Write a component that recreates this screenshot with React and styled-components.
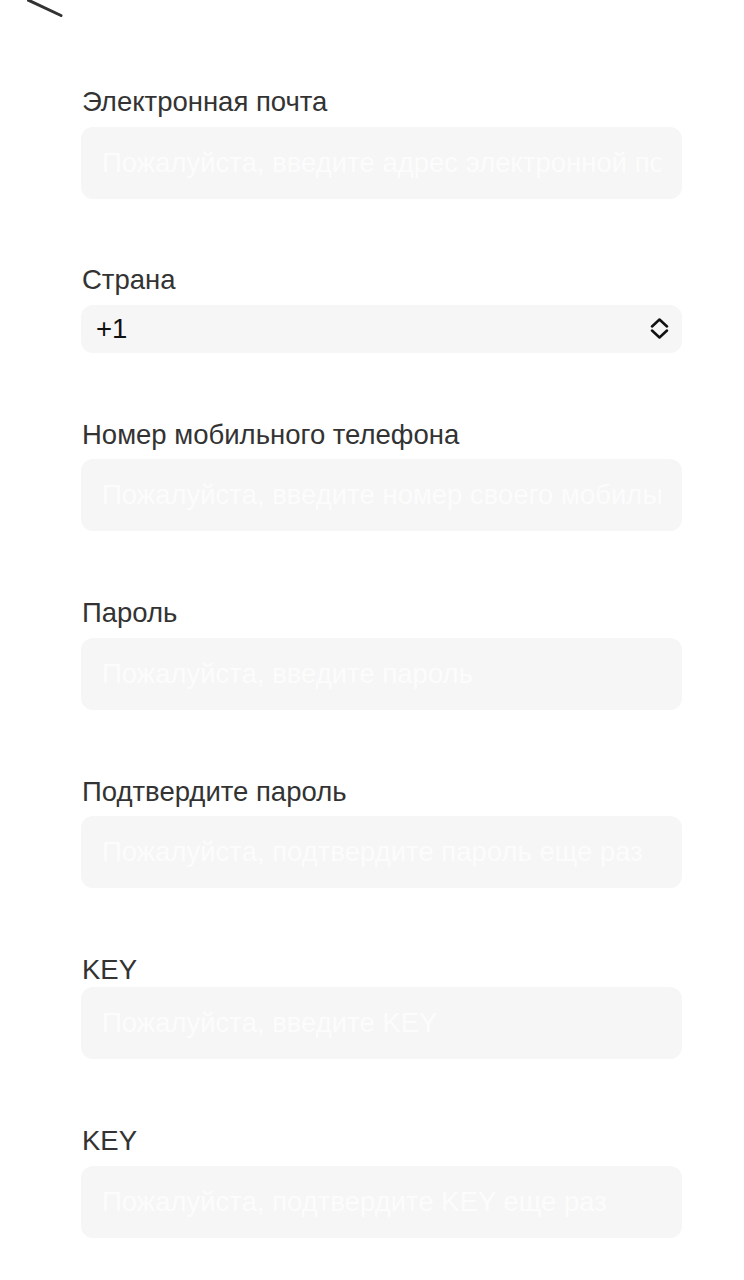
import React from "react";
import styled, { createGlobalStyle } from "styled-components";

const GlobalStyle = createGlobalStyle`
  html, body {
    margin: 0;
    padding: 0;
    background: #ffffff;
  }
  body {
    font-family: "Liberation Sans", Arial, sans-serif;
  }
  * { box-sizing: border-box; }
`;

const Page = styled.div`
  width: 744px;
  min-height: 1280px;
  background: #fff;
  overflow: hidden;
`;

const Header = styled.div`
  height: 18px;
  padding-left: 27px;
  display: flex;
  align-items: flex-start;
`;

const Form = styled.form`
  margin-top: 68.5px;
  padding: 0 62px 0 81px;
  display: flex;
  flex-direction: column;
  gap: 66.9px;
`;

const Field = styled.div`
  display: flex;
  flex-direction: column;
  gap: ${(p) => p.$gap}px;
`;

const Label = styled.label`
  font-size: 27.5px;
  line-height: 30px;
  color: #333333;
  padding-left: 1px;
`;

const Input = styled.input`
  width: 100%;
  height: 72px;
  border: none;
  outline: none;
  border-radius: 12px;
  background: #f6f6f6;
  padding: 0 21px;
  font-family: "Liberation Sans", Arial, sans-serif;
  font-size: 27.5px;
  color: #222;
  &::placeholder {
    color: #fcfcfc;
  }
`;

const SelectBox = styled.button`
  width: 100%;
  height: 48px;
  border: none;
  border-radius: 12px;
  background: #f6f6f6;
  padding: 0 13px 0 15px;
  display: flex;
  align-items: center;
  justify-content: space-between;
  font-family: "Liberation Sans", Arial, sans-serif;
  font-size: 27.5px;
  color: #111;
  cursor: pointer;
`;

const SelectValue = styled.span`
  line-height: 30px;
`;

const BackIcon = () => (
  <svg width="40" height="18" viewBox="0 0 40 18">
    <line x1="-10" y1="-5.2" x2="34" y2="15.5" stroke="#333" strokeWidth="3" strokeLinecap="round" />
  </svg>
);

const UpDownIcon = () => (
  <svg width="19" height="21" viewBox="0 0 19 21">
    <polyline points="2,8.5 9.5,1.5 17,8.5" fill="none" stroke="#111" strokeWidth="2.5" strokeLinecap="round" strokeLinejoin="round" />
    <polyline points="2,12.5 9.5,19.5 17,12.5" fill="none" stroke="#111" strokeWidth="2.5" strokeLinecap="round" strokeLinejoin="round" />
  </svg>
);

const fields = [
  { label: "Электронная почта", placeholder: "Пожалуйста, введите адрес электронной почты", type: "email", gap: 16 },
  { label: "Страна", select: "+1", gap: 15.5 },
  { label: "Номер мобильного телефона", placeholder: "Пожалуйста, введите номер своего мобильного телефона", type: "tel", gap: 15.5 },
  { label: "Пароль", placeholder: "Пожалуйста, введите пароль", type: "password", gap: 15.5 },
  { label: "Подтвердите пароль", placeholder: "Пожалуйста, подтвердите пароль еще раз", type: "password", gap: 15.5 },
  { label: "KEY", placeholder: "Пожалуйста, введите KEY", type: "text", gap: 8.5 },
  { label: "KEY", placeholder: "Пожалуйста, подтвердите KEY еще раз", type: "text", gap: 16 },
];

export default function App() {
  return (
    <Page>
      <GlobalStyle />
      <Header>
        <BackIcon />
      </Header>
      <Form onSubmit={(e) => e.preventDefault()}>
        {fields.map((f, i) => (
          <Field key={i} $gap={f.gap - 6}>
            <Label>{f.label}</Label>
            {f.select ? (
              <SelectBox type="button">
                <SelectValue>{f.select}</SelectValue>
                <UpDownIcon />
              </SelectBox>
            ) : (
              <Input type={f.type === "password" ? "text" : f.type} placeholder={f.placeholder} />
            )}
          </Field>
        ))}
      </Form>
    </Page>
  );
}
